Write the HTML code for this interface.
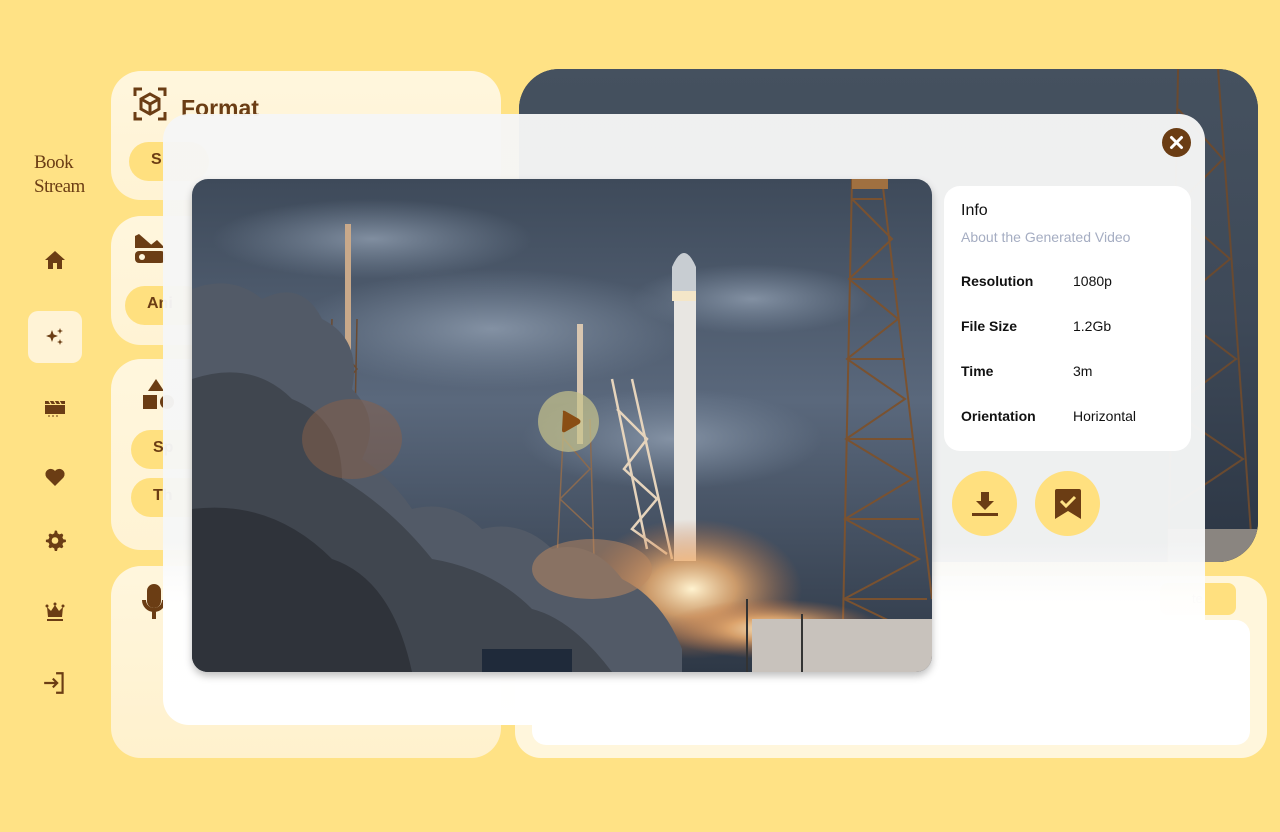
<!DOCTYPE html>
<html><head><meta charset="utf-8">
<style>
*{box-sizing:border-box;margin:0;padding:0}
body{width:1280px;height:832px;background:#ffe285;font-family:"Liberation Sans",sans-serif;position:relative;overflow:hidden;color:#6b3d14}
.abs{position:absolute}
.card{position:absolute;background:linear-gradient(180deg,#fff6dd,#fff3d4);border-radius:30px}
.pill{position:absolute;background:#ffe07f;border-radius:20px;font-weight:bold;font-size:16px;color:#6b3d14;padding:9px 0 0 22px}
.logo{position:absolute;left:34px;top:151px;font-family:"Liberation Serif",serif;font-size:19px;line-height:24px;color:#6b3d14;letter-spacing:-0.5px}
.nav{position:absolute;left:28px;width:54px;height:52px;display:flex;align-items:center;justify-content:center}
.modal{position:absolute;left:163px;top:114px;width:1042px;height:611px;border-radius:26px;background:linear-gradient(180deg,rgba(246,246,246,.96) 0%,rgba(246,247,247,.96) 70%,rgba(255,255,255,.98) 80%,#fff 100%)}
.info{position:absolute;left:944px;top:186px;width:247px;height:265px;background:#fff;border-radius:16px;font-size:14px;color:#111}
.row{position:absolute;left:17px;font-weight:bold}
.val{position:absolute;left:129px}
.circ{position:absolute;width:65px;height:65px;border-radius:50%;background:#ffe07f;display:flex;align-items:center;justify-content:center}
</style></head><body>

<div class="logo">Book<br>Stream</div>
<div class="nav" style="top:234px"><svg width="24" height="24" viewBox="0 0 24 24"><path d="M12 3 2 12h3v9h5v-6h4v6h5v-9h3z" fill="#6b3d14"/></svg></div>
<div class="nav" style="top:311px;background:#fff3d6;border-radius:10px"><svg width="24" height="24" viewBox="0 0 24 24" fill="#6b3d14"><path d="M9 5l1.6 4.4L15 11l-4.4 1.6L9 17l-1.6-4.4L3 11l4.4-1.6z"/><path d="M17 3l.8 2.2L20 6l-2.2.8L17 9l-.8-2.2L14 6l2.2-.8z"/><path d="M17 14l.8 2.2L20 17l-2.2.8L17 20l-.8-2.2L14 17l2.2-.8z"/></svg></div>
<div class="nav" style="top:382px"><svg width="24" height="24" viewBox="0 0 24 24" fill="#6b3d14"><path d="M2 9h20v9H2z"/><path d="M2 5h20v3H2z" fill="#6b3d14"/><path d="M6 5l2 3M11 5l2 3M16 5l2 3" stroke="#ffe285" stroke-width="1.3"/><path d="M5 20h2M9 20h2M13 20h2" stroke="#6b3d14" stroke-width="1"/></svg></div>
<div class="nav" style="top:451px"><svg width="24" height="24" viewBox="0 0 24 24"><path d="M12 21 3.5 12.5A5 5 0 0 1 12 6a5 5 0 0 1 8.5 6.5z" fill="#6b3d14"/></svg></div>
<div class="nav" style="top:514px"><svg width="24" height="24" viewBox="0 0 24 24"><path d="M12 2.5l2 .3.6 2.6 1.8 1 2.5-.9 1.4 1.5-.9 2.5.9 1.7 2.6.6v2.2l-2.6.6-.9 1.7.9 2.5-1.4 1.5-2.5-.9-1.8 1-.6 2.6h-2.2l-.6-2.6-1.8-1-2.5.9-1.4-1.5.9-2.5-.9-1.7-2.6-.6v-2.2l2.6-.6.9-1.7-.9-2.5 1.4-1.5 2.5.9 1.8-1 .6-2.6z" fill="#6b3d14"/><circle cx="12" cy="12.5" r="3.3" fill="#ffe285"/></svg></div>
<div class="nav" style="top:586px"><svg width="24" height="24" viewBox="0 0 24 24" fill="#6b3d14"><path d="M4 7l4 4 4-6 4 6 4-4-1 10H5z"/><circle cx="4" cy="6" r="1.5"/><circle cx="12" cy="4" r="1.5"/><circle cx="20" cy="6" r="1.5"/><rect x="4" y="19" width="16" height="2"/></svg></div>
<div class="nav" style="top:657px"><svg width="26" height="26" viewBox="0 0 24 24" fill="none" stroke="#6b3d14" stroke-width="2"><path d="M13 3h6v18h-6"/><path d="M2 12h12M10 8l4 4-4 4"/></svg></div>

<div class="card" style="left:111px;top:71px;width:390px;height:129px">
  <svg class="abs" style="left:22px;top:16px" width="34" height="34" viewBox="0 0 34 34" fill="none" stroke="#6b3d14" stroke-width="3"><path d="M2 9V2h7M25 2h7v7M32 25v7h-7M9 32H2v-7"/><path d="M17 7l9 5v10l-9 5-9-5V12z"/><path d="M8 12l9 5 9-5M17 17v10"/></svg>
  <div class="abs" style="left:70px;top:24px;font-size:23px;font-weight:bold;color:#6b3d14">Format</div>
  <div class="pill" style="left:18px;top:71px;width:80px;height:39px">S</div>
</div>
<div class="card" style="left:111px;top:216px;width:390px;height:129px">
  <svg class="abs" style="left:22px;top:16px" width="34" height="34" viewBox="0 0 34 34" fill="#6b3d14"><path d="M2 4l4-2 16 14H2z"/><path d="M14 16l10-8 8 8z"/><rect x="2" y="19" width="30" height="12" rx="4"/><circle cx="9" cy="25" r="3" fill="#fff6dd"/></svg>
  <div class="pill" style="left:14px;top:70px;width:80px;height:39px">Ani</div>
</div>
<div class="card" style="left:111px;top:359px;width:390px;height:191px">
  <svg class="abs" style="left:30px;top:18px" width="34" height="36" viewBox="0 0 34 36" fill="#6b3d14"><path d="M15 2l8 12H7z"/><rect x="2" y="18" width="14" height="14"/><circle cx="26" cy="25" r="7"/></svg>
  <div class="pill" style="left:20px;top:71px;width:80px;height:39px">Sp</div>
  <div class="pill" style="left:20px;top:119px;width:80px;height:39px">Th</div>
</div>
<div class="card" style="left:111px;top:566px;width:390px;height:192px;background:linear-gradient(180deg,#fff6dd,#fff1cd)">
  <svg class="abs" style="left:30px;top:18px" width="26" height="38" viewBox="0 0 26 38" fill="none" stroke="#6b3d14" stroke-width="4"><rect x="8" y="2" width="10" height="20" rx="5" fill="#6b3d14"/><path d="M3 16a10 10 0 0 0 20 0M13 27v8"/></svg>
</div>

<div class="abs" style="left:519px;top:69px;width:739px;height:493px;border-radius:40px;overflow:hidden;background:#2f3a48">
  <svg width="739" height="493" viewBox="0 0 740 493" preserveAspectRatio="none">
    <defs><linearGradient id="sky2" x1="0" y1="0" x2="0" y2="1"><stop offset="0" stop-color="#45515f"/><stop offset=".5" stop-color="#3e4958"/><stop offset="1" stop-color="#2c3644"/></linearGradient></defs>
    <rect width="740" height="493" fill="url(#sky2)"/>
    <g stroke="#6a4a30" stroke-width="2" fill="none"><path d="M660 0 L650 493M700 0 L735 493M660 40 L705 90 L655 140 L712 190 L652 240 L718 290 L651 340 L725 390 L650 440"/></g>
    <rect x="650" y="460" width="90" height="33" fill="#8a8580"/>
  </svg>
</div>
<div class="card" style="left:515px;top:576px;width:752px;height:182px;border-radius:26px;background:#fff6dc">
  <div class="abs" style="left:645px;top:7px;width:76px;height:32px;background:#ffe07f;border-radius:8px;font-size:13px;color:#6b3d14;padding:8px 0 0 32px">te</div>
  <div class="abs" style="left:17px;top:44px;width:718px;height:125px;background:#fff;border-radius:14px"></div>
</div>

<div class="modal"></div>
<div class="abs" style="left:1162px;top:128px;width:29px;height:29px;border-radius:50%;background:#6b3d14"><svg width="29" height="29" viewBox="0 0 29 29" stroke="#fff" stroke-width="3" stroke-linecap="round"><path d="M9.5 9.5l10 10M19.5 9.5l-10 10"/></svg></div>

<div class="abs" style="left:192px;top:179px;width:740px;height:493px;border-radius:16px;overflow:hidden;box-shadow:0 4px 8px rgba(0,0,0,.25)">
  <svg width="740" height="493" viewBox="0 0 740 493">
    <defs>
      <linearGradient id="sky" x1="0" y1="0" x2="0" y2="1"><stop offset="0" stop-color="#3e4a5a"/><stop offset=".45" stop-color="#5a687c"/><stop offset="1" stop-color="#2e3846"/></linearGradient>
      <radialGradient id="glow" cx="0.5" cy="0.5" r="0.5"><stop offset="0" stop-color="#fff3d0"/><stop offset=".4" stop-color="#f0b070" stop-opacity=".8"/><stop offset="1" stop-color="#c07040" stop-opacity="0"/></radialGradient>
      <radialGradient id="cl" cx=".5" cy=".5" r=".5"><stop offset="0" stop-color="#94a2b4" stop-opacity=".75"/><stop offset="1" stop-color="#8494a8" stop-opacity="0"/></radialGradient>
    </defs>
    <rect width="740" height="493" fill="url(#sky)"/>
    <ellipse cx="300" cy="150" rx="200" ry="60" fill="url(#cl)"/>
    <ellipse cx="480" cy="260" rx="150" ry="50" fill="url(#cl)"/>
    <ellipse cx="180" cy="60" rx="160" ry="40" fill="url(#cl)"/>
    <ellipse cx="560" cy="120" rx="120" ry="35" fill="url(#cl)"/>
    <g stroke="#7a5230" stroke-width="2" fill="none">
      <path d="M660 0 L650 493M690 0 L740 420"/>
      <path d="M660 20 L700 60 L657 100 L706 140 L655 180 L713 220 L654 260 L720 300 L653 340 L727 380 L652 420 L735 460"/>
      <path d="M660 20 L690 20M657 100 L706 100M655 180 L713 180M654 260 L720 260M653 340 L727 340M652 420 L735 420"/>
    </g>
    <rect x="660" y="0" width="36" height="10" fill="#a07040"/>
    <rect x="153" y="45" width="6" height="130" fill="#c9a98a"/>
    <g stroke="#6a4a30" stroke-width="1.5" fill="none"><path d="M140 140 L135 290M165 140 L162 290M140 160 L165 190 L138 220 L164 250 L136 280"/></g>
    <rect x="385" y="145" width="6" height="120" fill="#d8c6b0"/>
    <g stroke="#8a6a50" stroke-width="1.5" fill="none"><path d="M372 240 L365 380M398 240 L402 380M372 260 L398 290 L368 320 L400 350"/></g>
    <g stroke="#e6d4bc" stroke-width="2.5" fill="none"><path d="M420 200 L455 370M440 200 L480 380M425 230 L455 260 L432 290 L465 320 L440 350 L475 375"/></g>
    <path d="M480 88 Q492 60 504 88 L504 120 L480 120Z" fill="#c8cdd2"/>
    <rect x="480" y="112" width="24" height="10" fill="#f4e6c8"/>
    <rect x="482" y="122" width="22" height="260" fill="#e8e6e2"/>
    <ellipse cx="500" cy="410" rx="110" ry="70" fill="url(#glow)"/>
    <ellipse cx="580" cy="450" rx="110" ry="30" fill="url(#glow)"/>
    <path d="M0 110 Q40 95 70 120 Q110 100 130 140 Q170 160 160 210 Q190 240 170 280 Q200 300 220 330 Q260 320 290 350 Q330 340 360 370 Q400 360 430 400 Q470 420 490 470 L490 493 L0 493Z" fill="#525a67"/>
    <path d="M0 200 Q60 180 100 220 Q150 240 150 300 Q200 330 240 380 Q300 390 340 430 Q380 440 420 493 L0 493Z" fill="#40464f"/>
    <path d="M0 330 Q80 320 140 380 Q200 400 220 493 L0 493Z" fill="#2f333a"/>
    <ellipse cx="160" cy="260" rx="50" ry="40" fill="#8a6048" opacity=".5"/>
    <ellipse cx="400" cy="390" rx="60" ry="30" fill="#c08a60" opacity=".5"/>
    <rect x="560" y="440" width="180" height="53" fill="#c8c2bc"/>
    <rect x="290" y="470" width="90" height="23" fill="#1f2a3a"/>
    <path d="M555 420 L555 493M610 435 L610 493" stroke="#333" stroke-width="2"/>
  </svg>
</div>
<div class="abs" style="left:538px;top:391px;width:61px;height:61px;border-radius:50%;background:rgba(200,195,140,.7)"><svg width="61" height="61" viewBox="0 0 61 61"><path d="M25 21 Q24 19 27 20 L41 28 Q44 30.5 41 33 L27 41 Q24 42 24 39Z" fill="#8a4e14"/></svg></div>

<div class="info">
  <div class="abs" style="left:17px;top:16px;font-size:16px">Info</div>
  <div class="abs" style="left:17px;top:43px;color:#a5adc2">About the Generated Video</div>
  <div class="row" style="top:87px">Resolution</div><div class="val" style="top:87px">1080p</div>
  <div class="row" style="top:132px">File Size</div><div class="val" style="top:132px">1.2Gb</div>
  <div class="row" style="top:177px">Time</div><div class="val" style="top:177px">3m</div>
  <div class="row" style="top:222px">Orientation</div><div class="val" style="top:222px">Horizontal</div>
</div>
<div class="circ" style="left:952px;top:471px"><svg width="28" height="28" viewBox="0 0 28 28" fill="#6b3d14"><path d="M10 2h8v9h5l-9 9-9-9h5z"/><rect x="1" y="23" width="26" height="3"/></svg></div>
<div class="circ" style="left:1035px;top:471px"><svg width="28" height="32" viewBox="0 0 28 32"><path d="M1 3Q1 1 3 1h22q2 0 2 2v28l-13-8-13 8z" fill="#6b3d14"/><path d="M7 13l5 5 9-9" stroke="#ffe285" stroke-width="3" fill="none"/></svg></div>
</body></html>
